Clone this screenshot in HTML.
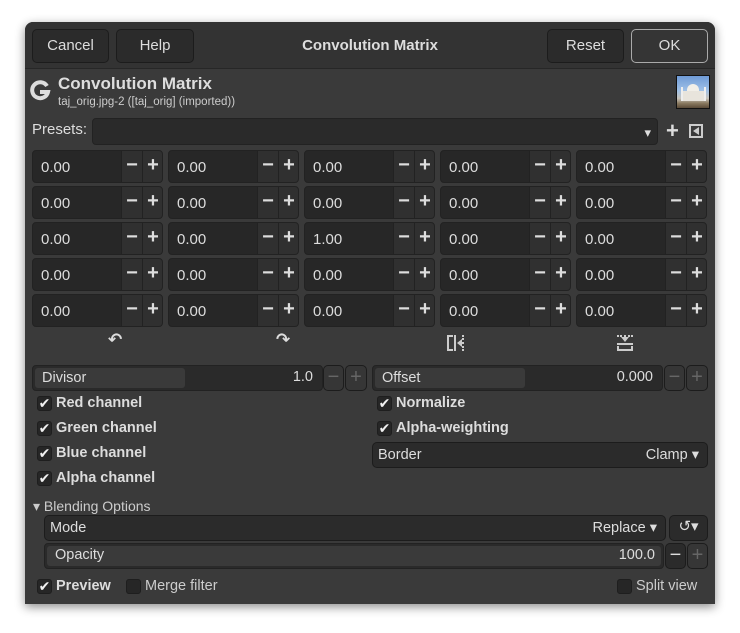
<!DOCTYPE html><html><head><style>
*{box-sizing:border-box;margin:0;padding:0}
body{width:740px;height:633px;background:#fff;font-family:"Liberation Sans","DejaVu Sans",sans-serif;color:#ddd;position:relative;overflow:hidden}
.win{position:absolute;left:25px;top:22px;width:690px;height:582px;background:#3a3a3a;border-radius:8px 8px 0 0;box-shadow:0 3px 10px rgba(0,0,0,.45)}
.hdr{position:absolute;left:0;top:0;width:690px;height:47px;background:#333;border-radius:8px 8px 0 0;border-bottom:1px solid #272727}
.a{position:absolute}
.btn{position:absolute;background:#2b2b2b;border:1px solid #1c1c1c;border-radius:5px;color:#ddd;font-size:15px;text-align:center;line-height:31px}
.ent{position:absolute;background:#272727;border:1px solid #222;border-radius:4px;font-size:15px;color:#ddd}
.pm{position:absolute;width:21px;height:33px;background:#303030;border-left:1px solid #222;text-align:center;line-height:31px;font-size:20px;font-weight:bold;color:#ddd}
.cb{position:absolute;width:15px;height:15px;background:#262626;border:1px solid #1e1e1e;border-radius:3px;font-size:14px;line-height:13px;text-align:center;color:#f0f0f0;font-weight:bold}
.lb{position:absolute;font-size:14.5px;font-weight:bold;color:#ddd}
</style></head><body>
<div class="win">
<div class="hdr">
<div class="btn" style="left:7px;top:7px;width:77px;height:34px">Cancel</div>
<div class="btn" style="left:91px;top:7px;width:78px;height:34px">Help</div>
<div class="a" style="left:0;width:690px;top:15px;text-align:center;font-size:15px;font-weight:bold;color:#ddd">Convolution Matrix</div>
<div class="btn" style="left:522px;top:7px;width:77px;height:34px">Reset</div>
<div class="btn" style="left:606px;top:7px;width:77px;height:34px;border:1px solid #aaa;background:#353535">OK</div>
</div>
<svg class="a" style="left:4px;top:58px" width="22" height="22" viewBox="0 0 22 22"><path d="M18 6 A8 8 0 1 0 19 12 H11" fill="none" stroke="#ddd" stroke-width="4"/></svg>
<div class="a" style="left:33px;top:52px;font-size:17px;font-weight:bold;color:#ddd">Convolution Matrix</div>
<div class="a" style="left:33px;top:74px;font-size:11.5px;color:#ccc">taj_orig.jpg-2 ([taj_orig] (imported))</div>
<div class="a" style="left:651px;top:53px;width:34px;height:34px;background:linear-gradient(#6f9bd6 0,#9fc0e6 45%,#c8c4bc 70%,#8a7a60 85%,#5a4a38);border:1px solid #111;overflow:hidden"><div class="a" style="left:10px;top:8px;width:12px;height:12px;border-radius:50% 50% 10% 10%;background:#f2efe8"></div><div class="a" style="left:5px;top:15px;width:23px;height:10px;background:#e8e4dc"></div><div class="a" style="left:4px;top:11px;width:2px;height:14px;background:#eee"></div><div class="a" style="left:27px;top:11px;width:2px;height:14px;background:#eee"></div></div>
<div class="a" style="left:7px;top:99px;font-size:15px;color:#ddd">Presets:</div>
<div class="ent" style="left:67px;top:96px;width:566px;height:27px;background:#2a2a2a"><span class="a" style="right:6px;top:6px;font-size:13px">▾</span></div>
<div class="a" style="left:641px;top:96px;font-size:22px;font-weight:bold;line-height:26px">+</div>
<div class="a" style="left:664px;top:102px;width:14px;height:14px;border:2px solid #ccc"><div class="a" style="left:2px;top:1px;width:0;height:0;border-top:4px solid transparent;border-bottom:4px solid transparent;border-right:6px solid #ccc"></div></div>

<div id="grid"></div>

<div class="a" style="left:83px;top:308px;font-size:17px;font-weight:bold">↶</div>
<div class="a" style="left:251px;top:308px;font-size:17px;font-weight:bold">↷</div>
<div class="a" style="left:422px;top:313px;width:16px;height:16px;"><div class="a" style="left:0;top:0;width:6px;height:16px;border:2px solid #ccc;border-right:0"></div><div class="a" style="left:7px;top:0;width:2px;height:16px;background:#ccc"></div><div class="a" style="left:10px;top:4px;border-top:4px solid transparent;border-bottom:4px solid transparent;border-right:5px solid #ccc"></div><div class="a" style="left:15px;top:0;width:1px;height:16px;border-right:2px dotted #ccc"></div></div>
<div class="a" style="left:592px;top:313px;width:16px;height:16px"><div class="a" style="left:0;top:0;width:16px;border-top:2px dotted #ccc"></div><div class="a" style="left:4px;top:2px;border-left:4px solid transparent;border-right:4px solid transparent;border-top:5px solid #ccc"></div><div class="a" style="left:0;top:8px;width:16px;height:2px;background:#ccc"></div><div class="a" style="left:0;top:11px;width:16px;height:5px;border:2px solid #ccc;border-top:0"></div></div>

<div class="ent" style="left:7px;top:343px;width:291px;height:26px;background:#2a2a2a"><div class="a" style="left:2px;top:2px;width:150px;height:20px;background:#3a3a3a;border-radius:3px"></div><span class="a" style="left:9px;top:4px;font-size:14.5px">Divisor</span><span class="a" style="right:9px;top:3px;font-size:14.5px">1.0</span></div>
<div class="btn" style="left:298px;top:343px;width:21px;height:26px;line-height:22px;color:#666;font-size:20px;background:#363636">−</div>
<div class="btn" style="left:320px;top:343px;width:22px;height:26px;line-height:22px;color:#666;font-size:20px;background:#363636">+</div>
<div class="ent" style="left:347px;top:343px;width:291px;height:26px;background:#2a2a2a"><div class="a" style="left:2px;top:2px;width:150px;height:20px;background:#3a3a3a;border-radius:3px"></div><span class="a" style="left:9px;top:4px;font-size:14.5px">Offset</span><span class="a" style="right:9px;top:3px;font-size:14.5px">0.000</span></div>
<div class="btn" style="left:639px;top:343px;width:21px;height:26px;line-height:22px;color:#666;font-size:20px;background:#363636">−</div>
<div class="btn" style="left:661px;top:343px;width:22px;height:26px;line-height:22px;color:#666;font-size:20px;background:#363636">+</div>

<div class="cb" style="left:12px;top:374px">✔</div><div class="lb" style="left:31px;top:373px">Red channel</div>
<div class="cb" style="left:12px;top:399px">✔</div><div class="lb" style="left:31px;top:398px">Green channel</div>
<div class="cb" style="left:12px;top:424px">✔</div><div class="lb" style="left:31px;top:423px">Blue channel</div>
<div class="cb" style="left:12px;top:449px">✔</div><div class="lb" style="left:31px;top:448px">Alpha channel</div>
<div class="cb" style="left:352px;top:374px">✔</div><div class="lb" style="left:371px;top:373px">Normalize</div>
<div class="cb" style="left:352px;top:399px">✔</div><div class="lb" style="left:371px;top:398px">Alpha-weighting</div>
<div class="btn" style="left:347px;top:420px;width:336px;height:26px;line-height:24px;text-align:left;font-size:14.5px;padding-left:5px">Border<span class="a" style="right:8px;top:0">Clamp ▾</span></div>

<div class="a" style="left:8px;top:476px;font-size:14px;color:#ccc">▾ Blending Options</div>
<div class="btn" style="left:19px;top:493px;width:622px;height:26px;line-height:24px;text-align:left;font-size:14.5px;padding-left:5px">Mode<span class="a" style="right:8px;top:0">Replace ▾</span></div>
<div class="btn" style="left:644px;top:493px;width:39px;height:26px;line-height:22px;font-size:15px">↺▾</div>
<div class="ent" style="left:19px;top:521px;width:620px;height:26px;background:#2a2a2a"><div class="a" style="left:2px;top:2px;width:614px;height:20px;background:#3a3a3a;border-radius:3px"></div><span class="a" style="left:10px;top:3px;font-size:14.5px">Opacity</span><span class="a" style="right:8px;top:3px;font-size:14.5px">100.0</span></div>
<div class="btn" style="left:640px;top:521px;width:21px;height:26px;line-height:22px;font-size:20px">−</div>
<div class="btn" style="left:662px;top:521px;width:21px;height:26px;line-height:22px;color:#666;font-size:20px;background:#363636">+</div>

<div class="cb" style="left:12px;top:557px">✔</div><div class="lb" style="left:31px;top:556px">Preview</div>
<div class="cb" style="left:101px;top:557px"></div><div class="a" style="left:120px;top:556px;font-size:14.5px;color:#ccc">Merge filter</div>
<div class="cb" style="left:592px;top:557px"></div><div class="a" style="left:611px;top:556px;font-size:14.5px;color:#ccc">Split view</div>
</div>
<script>
var g='',v;for(var r=0;r<5;r++)for(var c=0;c<5;c++){v=(r==2&&c==2)?'1.00':'0.00';var x=7+c*136,y=128+r*36;
g+='<div class="ent" style="left:'+x+'px;top:'+y+'px;width:131px;height:33px;overflow:hidden"><span class="a" style="left:8px;top:8px">'+v+'</span><div class="pm" style="left:88px;top:-1px">−</div><div class="pm" style="left:109px;top:-1px">+</div></div>';}
document.getElementById('grid').outerHTML=g;
</script>
</body></html>
